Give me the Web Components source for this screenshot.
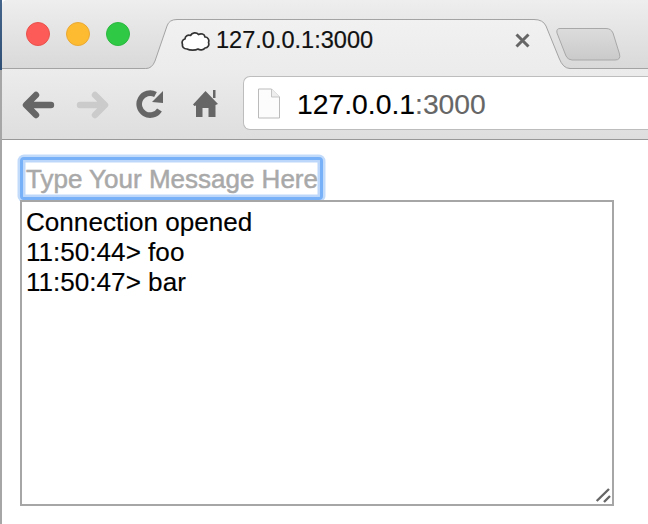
<!DOCTYPE html>
<html lang="en"><head><meta charset="utf-8"><title>127.0.0.1:3000</title>
<style>html,body{margin:0;padding:0;background:#fff}body{font-family:"Liberation Sans",Arial,sans-serif}</style>
</head><body>
<browser-window>
  <browser-tabstrip>
    <traffic-lights></traffic-lights>
    <browser-tab>127.0.0.1:3000</browser-tab>
    <new-tab-button></new-tab-button>
  </browser-tabstrip>
  <browser-toolbar>
    <nav-icon kind="back"></nav-icon>
    <nav-icon kind="forward"></nav-icon>
    <nav-icon kind="reload"></nav-icon>
    <nav-icon kind="home"></nav-icon>
    <address-bar host-part="127.0.0.1" port-part=":3000"></address-bar>
  </browser-toolbar>
  <chat-page>
    <message-input>Type Your Message Here</message-input>
    <message-log>
      <div>Connection opened</div>
      <div>11:50:44&gt; foo</div>
      <div>11:50:47&gt; bar</div>
    </message-log>
  </chat-page>
</browser-window>
<script>
function def(name, html, init){
  customElements.define(name, class extends HTMLElement{
    constructor(){super();this.attachShadow({mode:'open'}).innerHTML=html;}
    connectedCallback(){ if(init) init(this); }
  });
}
def('browser-window',`<style>
:host{display:grid;grid-template-columns:2px 1fr;width:648px;height:524px;overflow:hidden;background:#fff}
.edge{display:flex;flex-direction:column}
.d{height:70px;background:linear-gradient(#46658a,#2f4f74)}
.g{flex:1;background:#a6a6a6}
.main{display:flex;flex-direction:column;min-width:0}
</style><div class="edge"><div class="d"></div><div class="g"></div></div><div class="main"><slot></slot></div>`);
def('browser-tabstrip',`<style>
:host{display:flex;align-items:flex-start;box-sizing:border-box;height:69px;background:linear-gradient(#eeeeee,#d9d9d9);border-bottom:1px solid #a3a3a3;border-top-left-radius:5px;padding-left:24px}
</style><slot></slot>`);
def('traffic-lights',`<style>
:host{display:flex;gap:16px;margin-top:22px;width:120px;flex:none}
i{display:block;box-sizing:border-box;width:24px;height:24px;border-radius:50%;border:1px solid}
.r{background:#fc5b57;border-color:#e9524d}.y{background:#fdbb32;border-color:#eaa934}.g{background:#2fc946;border-color:#2cb83f}
</style><i class="r"></i><i class="y"></i><i class="g"></i>`);
def('browser-tab',`<style>
:host{display:flex;align-items:center;position:relative;flex:none;box-sizing:border-box;width:420px;height:50px;margin-top:19px;padding:0 0 7px 35px;z-index:1;font:23.55px "Liberation Sans",Arial,sans-serif;color:#111;-webkit-text-stroke:.2px #111}
svg.bg{position:absolute;left:0;top:0;z-index:-1;overflow:visible}
.label{margin-left:6px;flex:1}
.x{margin-right:36px}
</style>
<svg class="bg" width="420" height="50" viewBox="0 0 420 50"><defs><linearGradient id="t" x1="0" y1="0" x2="0" y2="1"><stop offset="0" stop-color="#f1f1f1"/><stop offset="1" stop-color="#ececec"/></linearGradient></defs>
<path d="M0 49.5 Q6 49.5 9 42 L21 7 Q23 .5 31 .5 L388 .5 Q397 .5 400 7 L413 39 Q417 49.5 424 49.5 L424 51 L-2 51 Z" fill="url(#t)"/>
<path d="M0 49.5 Q6 49.5 9 42 L21 7 Q23 .5 31 .5 L388 .5 Q397 .5 400 7 L413 39 Q417 49.5 424 49.5" fill="none" stroke="#a3a3a3"/></svg>
<svg width="29" height="20" viewBox="0 0 29 20"><path d="M6 18C2.5 18 1 15.5 1.5 13.5C.5 11 1.5 8.5 4 8C4 5 7 3.5 9.5 4.5C11 1.5 15.5 1 17.5 3.5C20 2 23.5 3 24 6C27 6 28.5 9 27.5 11.5C28.5 14 27 17 24 17C22.5 19 19 19.5 17 18C14.5 19.5 9 19.5 6 18Z" fill="#fff" stroke="#333" stroke-width="1.7" stroke-linejoin="round"/></svg>
<span class="label"><slot></slot></span>
<svg class="x" width="15" height="15" viewBox="0 0 15 15"><path d="M1.5 1.5L13.5 13.5M13.5 1.5L1.5 13.5" stroke="#666" stroke-width="3"/></svg>`);
def('new-tab-button',`<style>
:host{display:block;flex:none;width:66px;height:34px;margin:27px 0 0 -11px;position:relative;z-index:2}
svg{display:block}
</style><svg width="66" height="34" viewBox="0 0 66 34"><defs><linearGradient id="n" x1="0" y1="0" x2="0" y2="1"><stop offset="0" stop-color="#dcdcdc"/><stop offset="1" stop-color="#cacaca"/></linearGradient></defs>
<path d="M5 1.5L51 1.5Q56 1.5 58 6L64.5 27Q66 33 60 33L17 33Q13 33 11 29L2 6Q1 1.5 5 1.5Z" fill="url(#n)" stroke="#a8a8a8"/></svg>`);
def('browser-toolbar',`<style>
:host{display:flex;align-items:flex-start;box-sizing:border-box;height:71px;background:linear-gradient(#ececec,#dedede);border-bottom:1px solid #989898;padding:7px 0 0 0;overflow:hidden}
</style><slot></slot>`);
const icons={
 back:[`margin:14px 0 0 20px;width:33px;height:30px`,`<svg width="33" height="30" viewBox="0 0 33 30"><path d="M14 5L4 15 14 25M5 15H29" fill="none" stroke="#666" stroke-width="6.4" stroke-linecap="round" stroke-linejoin="round"/></svg>`],
 forward:[`margin:14px 0 0 21px;width:33px;height:30px`,`<svg width="33" height="30" viewBox="0 0 33 30"><path d="M19 5L29 15 19 25M4 15H28" fill="none" stroke="#cbcbcb" stroke-width="6.4" stroke-linecap="round" stroke-linejoin="round"/></svg>`],
 reload:[`margin:13px 0 0 27px;width:30px;height:30px`,`<svg width="30" height="30" viewBox="0 0 30 30"><path d="M19.5 5.5A11 11 0 1 0 23.5 21" fill="none" stroke="#666" stroke-width="5.6"/><path d="M27 2V14L16 13Z" fill="#666"/></svg>`],
 home:[`margin:13px 0 0 27px;width:27px;height:30px`,`<svg width="27" height="30" viewBox="0 0 27 30"><path d="M0 15.5L12.5 2 25 15 22.5 16V28H15.5V19H9.5V28H3V16.5L1.5 17Z" fill="#666"/><rect x="20" y="1" width="2.5" height="8" fill="#666"/></svg>`]
};
def('nav-icon','',el=>{const k=icons[el.getAttribute('kind')];el.shadowRoot.innerHTML=`<style>:host{display:block;flex:none;${k[0]}}svg{display:block}</style>${k[1]}`;});
def('address-bar',`<style>
:host{display:flex;align-items:center;flex:none;box-sizing:border-box;width:420px;height:54px;margin-left:23px;padding:3px 0 0 14px;background:#fff;border:1px solid #bdbdbd;border-right:0;border-radius:7px 0 0 7px;font:28.3px "Liberation Sans",Arial,sans-serif;color:#000;-webkit-text-stroke:.15px currentColor}
svg{display:block;margin:-3px 17px 0 0;flex:none}
.p{color:#666}
</style><svg width="22" height="31" viewBox="0 0 22 31"><path d="M.5 1H13.5L21.5 9V30H.5Z" fill="#fcfcfc" stroke="#bbb"/><path d="M13.5 1V9H21.5" fill="#eee" stroke="#c4c4c4"/></svg>
<span id="h"></span><span class="p" id="o"></span>`,el=>{el.shadowRoot.getElementById('h').textContent=el.getAttribute('host-part');el.shadowRoot.getElementById('o').textContent=el.getAttribute('port-part');});
def('chat-page',`<style>
:host{display:flex;flex-direction:column;align-items:flex-start;padding:17px 0 0 18px;flex:1}
</style><slot></slot>`);
def('message-input',`<style>
:host{display:block;box-sizing:border-box;width:303px;height:43px;padding:4px 0 0 3px;background:#fff;border:3px solid #78b1f7;border-radius:4px;box-shadow:0 0 0 2.5px #c3dbfb,inset 0 0 0 2.5px #bcd7fa;font:26px/30px "Liberation Sans",Arial,sans-serif;color:#a9a9a9;white-space:nowrap;-webkit-text-stroke:.5px #a9a9a9}
</style><slot></slot>`);
def('message-log',`<style>
:host{display:block;box-sizing:border-box;width:594px;height:306px;background:#fff;border:2px solid #a6a6a6;padding:5px 4px;font:26.1px/30px "Liberation Sans",Arial,sans-serif;color:#000;position:relative;-webkit-text-stroke:.15px #000}
svg{position:absolute;right:1px;bottom:1px}
</style><slot></slot><svg width="16" height="16" viewBox="0 0 16 16"><path d="M1.7 14L14 2M9 15L15 9" stroke="#666" stroke-width="2.4"/></svg>`);
</script>
</body></html>
